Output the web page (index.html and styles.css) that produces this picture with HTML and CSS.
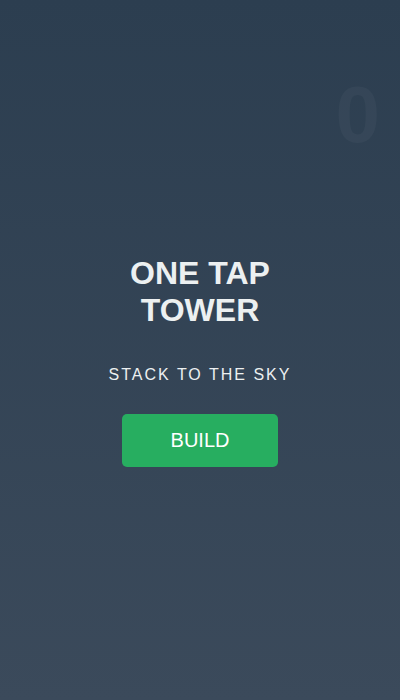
FILE: index.html
```html
<!DOCTYPE html>
<html lang="en">
<head>
  <meta charset="UTF-8" />
  <title>One Tap Tower</title>
  <link rel="stylesheet" href="styles.css">
</head>
<body>
  <div class="game">
    <div class="score">0</div>

    <div class="menu">
      <h1 class="title">ONE TAP TOWER</h1>
      <p class="tagline">STACK TO THE SKY</p>
      <button class="build-btn">BUILD</button>
    </div>
  </div>
</body>
</html>
```

FILE: styles.css
```css
html, body {
  margin: 0;
  height: 100%;
}
body {
  font-family: 'Liberation Sans', Arial, sans-serif;
  background: linear-gradient(to bottom, #2c3e50, #3b4a5b);
  color: #ecf0f1;
  overflow: hidden;
}
.game {
  position: relative;
  height: 100%;
  box-sizing: border-box;
  padding-top: 22px;
  display: flex;
  align-items: center;
  justify-content: center;
}
.score {
  position: absolute;
  top: 69px;
  right: 20px;
  font-size: 80px;
  font-weight: bold;
  color: rgba(255, 255, 255, 0.035);
}
.menu {
  display: flex;
  flex-direction: column;
  align-items: center;
  text-align: center;
}
.title {
  margin: 0 0 37px;
  max-width: 200px;
  font-size: 32px;
  font-weight: bold;
}
.tagline {
  margin: 0 0 30px;
  font-size: 16px;
  letter-spacing: 2px;
}
.build-btn {
  font-family: inherit;
  font-size: 20px;
  color: #fff;
  background-color: #27ae60;
  border: none;
  border-radius: 5px;
  padding: 15px 49px;
  cursor: pointer;
}
```
